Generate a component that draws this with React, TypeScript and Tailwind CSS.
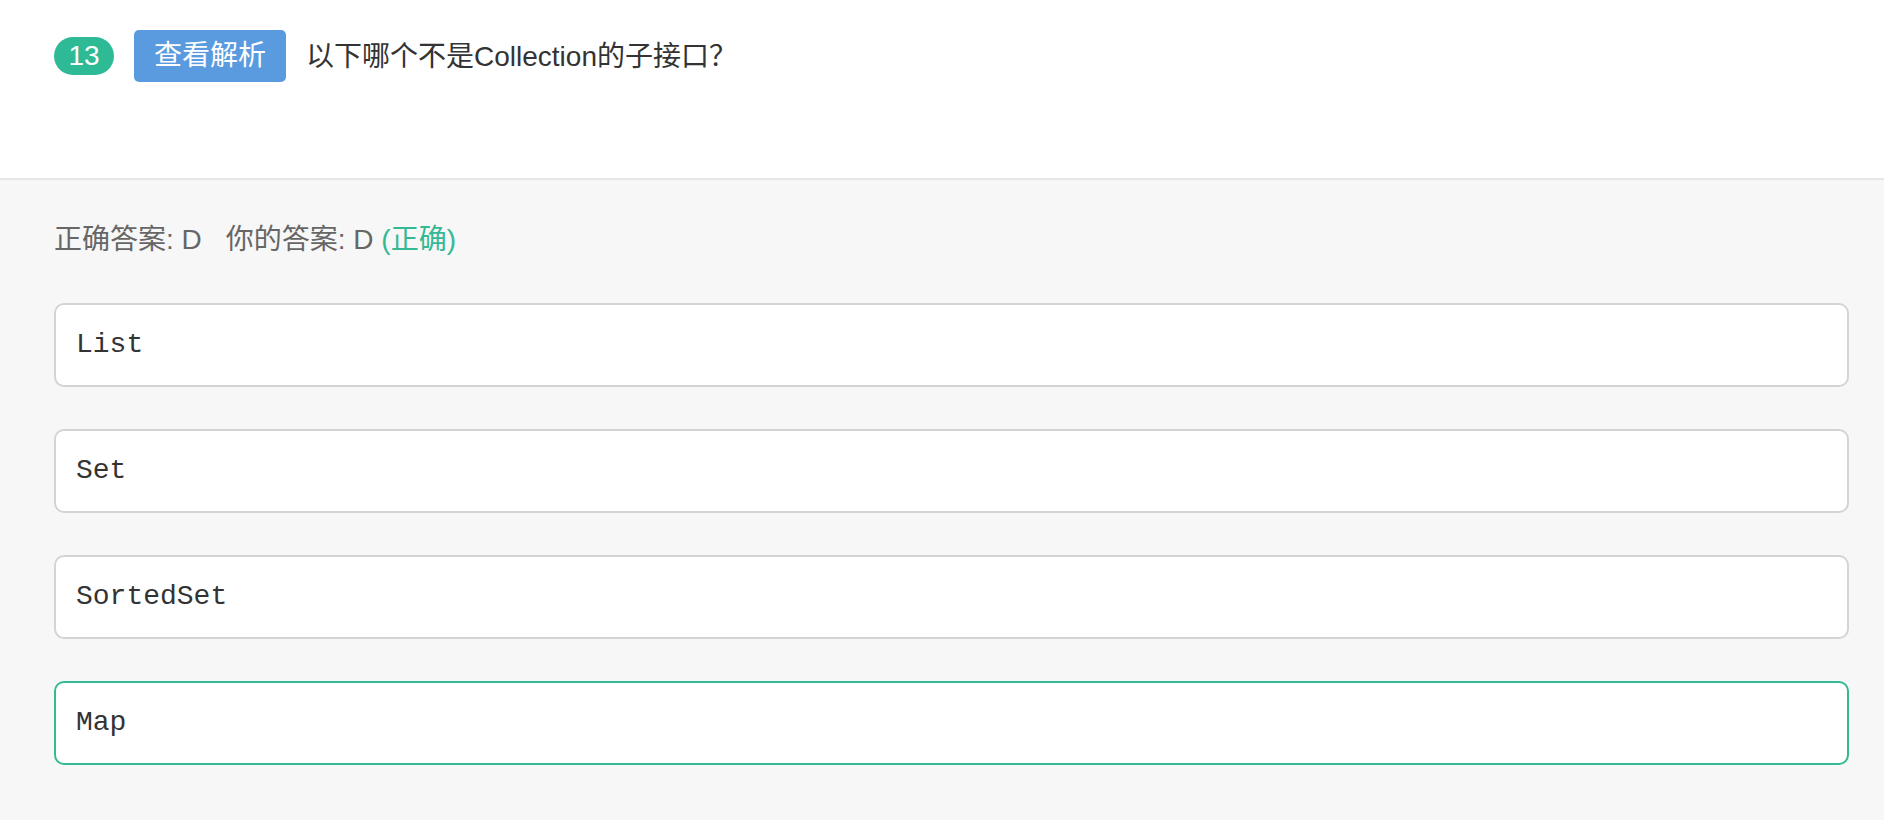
const options = ["List", "Set", "SortedSet", "Map"];
const correct = 3;

export default function App() {
  return (
    <div
      className="min-h-screen w-full bg-[#f7f7f7] text-[28px]"
      style={{ fontFamily: '"Liberation Sans", "Noto Sans CJK SC", sans-serif' }}
    >
      <header className="h-[180px] bg-white border-b-2 border-[#e6e6e6] pl-[54px] pt-[30px]">
        <div className="flex items-center h-[52px]">
          <span className="flex items-center justify-center w-[60px] h-[38px] rounded-full bg-[#2fba96] text-white leading-none">
            13
          </span>
          <button className="ml-[20px] w-[152px] h-[52px] rounded-[5px] bg-[#5a9be0] text-white leading-none">
            查看解析
          </button>
          <p className="ml-[20px] mt-[2px] text-[#333] leading-none">以下哪个不是Collection的子接口？</p>
        </div>
      </header>

      <main className="pl-[54px] pr-[35px] pt-[40px] pb-[55px]">
        <p className="h-[40px] leading-[40px] text-[#666]">
          正确答案: D<span className="ml-[24px]">你的答案: D</span>{" "}
          <span className="text-[#35b994]">(正确)</span>
        </p>
        <ul className="mt-[43px] flex flex-col gap-[42px]">
          {options.map((opt, i) => (
            <li
              key={opt}
              className={
                "h-[84px] flex items-center rounded-[10px] border-2 bg-white pl-[20px] text-[#333] " +
                (i === correct ? "border-[#35b994]" : "border-[#d4d4d4]")
              }
              style={{ fontFamily: '"Liberation Mono", monospace' }}
            >
              {opt}
            </li>
          ))}
        </ul>
      </main>
    </div>
  );
}
